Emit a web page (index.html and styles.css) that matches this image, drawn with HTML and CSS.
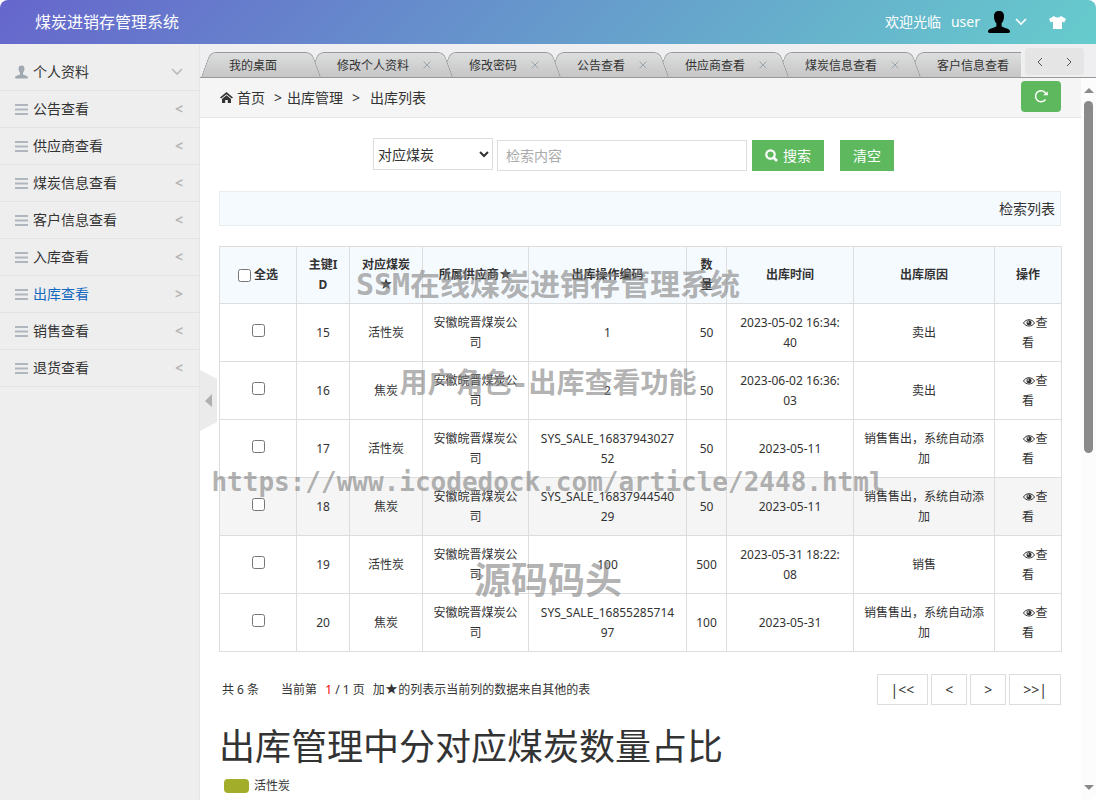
FILE: index.html
```html
<!DOCTYPE html>
<html lang="zh-CN">
<head>
    <meta charset="UTF-8">
    <meta name="viewport" content="width=device-width, initial-scale=1.0">
    <title>煤炭进销存管理系统</title>
    <link rel="stylesheet" href="styles.css">
</head>
<body>
    <!-- shared icons -->
    <svg class="icon-defs" aria-hidden="true">
        <symbol id="icon-user" viewBox="0 0 22 22">
            <path d="M11 0C14.500 0 16 2 16 5.200C16 8.500 15.200 10.500 13.600 12.200V15C14.600 17 22 17.200 22 20.400Q22 22 20 22H2Q0 22 0 20.400C0 17.200 7.400 17 8.400 15V12.200C6.800 10.500 6 8.500 6 5.200C6 2 7.500 0 11 0Z"/>
        </symbol>
        <symbol id="icon-bars" viewBox="0 0 13 11">
            <path d="M0 0h13v2H0zM0 4.500h13v2H0zM0 9h13v2H0z"/>
        </symbol>
        <symbol id="icon-down" viewBox="0 0 12 8">
            <path d="M1 1l5 5 5-5" fill="none" stroke="currentColor" stroke-width="1.700"/>
        </symbol>
        <symbol id="icon-close" viewBox="0 0 8 8">
            <path d="M.5.5l7 7M7.500.5l-7 7" fill="none" stroke="currentColor"/>
        </symbol>
        <symbol id="icon-eye" viewBox="0 0 12 10">
            <path d="M.5 5C3 .6 9 .6 11.500 5C9 9 3 9 .5 5Z" fill="none" stroke="currentColor"/>
            <circle cx="6" cy="4.800" r="2.500"/>
            <circle cx="5.200" cy="4" r=".8" fill="#fff"/>
        </symbol>
    </svg>

    <header class="header">
        <h1 class="logo">煤炭进销存管理系统</h1>
        <div class="user-box">
            <span>欢迎光临</span>
            <span class="user-name">user</span>
            <svg class="avatar"><use href="#icon-user"/></svg>
            <svg class="user-arrow"><use href="#icon-down"/></svg>
            <svg class="skin" viewBox="0 0 17 13"><path d="M5 0Q8.500 3 12 0L17 3L15.200 6.400L13 5.400V13H4V5.400L1.800 6.400L0 3Z"/></svg>
        </div>
    </header>

    <div class="wrapper">
        <nav class="sidebar">
            <a href="#"><svg class="menu-icon menu-user"><use href="#icon-user"/></svg>个人资料<svg class="menu-down"><use href="#icon-down"/></svg></a>
            <a href="#"><svg class="menu-icon"><use href="#icon-bars"/></svg>公告查看<i>&lt;</i></a>
            <a href="#"><svg class="menu-icon"><use href="#icon-bars"/></svg>供应商查看<i>&lt;</i></a>
            <a href="#"><svg class="menu-icon"><use href="#icon-bars"/></svg>煤炭信息查看<i>&lt;</i></a>
            <a href="#"><svg class="menu-icon"><use href="#icon-bars"/></svg>客户信息查看<i>&lt;</i></a>
            <a href="#"><svg class="menu-icon"><use href="#icon-bars"/></svg>入库查看<i>&lt;</i></a>
            <a href="#" class="active"><svg class="menu-icon"><use href="#icon-bars"/></svg>出库查看<i>&gt;</i></a>
            <a href="#"><svg class="menu-icon"><use href="#icon-bars"/></svg>销售查看<i>&lt;</i></a>
            <a href="#"><svg class="menu-icon"><use href="#icon-bars"/></svg>退货查看<i>&lt;</i></a>
        </nav>

        <button type="button" class="collapse" aria-label="收起菜单">
            <svg viewBox="0 0 17 61"><path d="M0 0L17 9V52L0 61Z" fill="#ebebeb"/><path d="M5 31L12 24V37Z" fill="#b0b0b0"/></svg>
        </button>

        <main class="main">
            <div class="tab-bar">
                <ul class="tabs">
                    <li>我的桌面</li>
                    <li>修改个人资料<svg><use href="#icon-close"/></svg></li>
                    <li>修改密码<svg><use href="#icon-close"/></svg></li>
                    <li>公告查看<svg><use href="#icon-close"/></svg></li>
                    <li>供应商查看<svg><use href="#icon-close"/></svg></li>
                    <li>煤炭信息查看<svg><use href="#icon-close"/></svg></li>
                    <li>客户信息查看<svg><use href="#icon-close"/></svg></li>
                </ul>
                <div class="tab-nav">
                    <button type="button" aria-label="上一个"><svg viewBox="0 0 6 10"><path d="M5 1L1 5l4 4"/></svg></button>
                    <button type="button" aria-label="下一个"><svg viewBox="0 0 6 10"><path d="M1 1l4 4-4 4"/></svg></button>
                </div>
            </div>

            <div class="frame">
                <div class="page">
                    <div class="breadcrumb">
                        <svg class="home" viewBox="0 0 13 11"><path d="M6.500 0L13 5.400L11.800 6.600L6.500 2.200L1.200 6.600L0 5.400Z"/><path d="M6.500 3.300L11 7V11H7.800V8H5.200V11H2V7Z"/></svg>
                        <a href="#">首页</a>
                        <span>&gt;</span>
                        <a href="#">出库管理</a>
                        <span>&gt;</span>
                        <a href="#" class="last">出库列表</a>
                        <button type="button" class="refresh" aria-label="刷新">
                            <svg viewBox="0 0 14 14"><path d="M11.500 10.500A5.500 5.500 0 1 1 12.300 5.500" fill="none" stroke="#fff" stroke-width="1.500"/><path d="M9 6.300h4.800V2.500Z" fill="#fff"/></svg>
                        </button>
                    </div>

                    <div class="container">
                        <form class="search">
                            <select name="field" aria-label="检索字段">
                                <option>对应煤炭</option>
                                <option>所属供应商</option>
                            </select>
                            <input type="text" name="keyword" placeholder="检索内容" aria-label="检索内容">
                            <button type="submit" class="btn"><svg viewBox="0 0 13 13"><circle cx="5.500" cy="5.500" r="4.200" fill="none" stroke="#fff" stroke-width="2.200"/><path d="M8.500 8.500L12 12" stroke="#fff" stroke-width="2.600"/></svg>搜索</button>
                            <button type="reset" class="btn btn-clear">清空</button>
                        </form>

                        <div class="list-title">检索列表</div>

                        <table>
                            <colgroup>
                                <col class="c-check"><col class="c-id"><col class="c-coal"><col class="c-supplier"><col class="c-code"><col class="c-num"><col class="c-time"><col class="c-reason"><col class="c-action">
                            </colgroup>
                            <thead>
                                <tr>
                                    <th><label><input type="checkbox">全选</label></th>
                                    <th>主键ID</th>
                                    <th>对应煤炭<span class="star">★</span></th>
                                    <th>所属供应商<span class="star">★</span></th>
                                    <th>出库操作编码</th>
                                    <th class="num">数量</th>
                                    <th>出库时间</th>
                                    <th>出库原因</th>
                                    <th>操作</th>
                                </tr>
                            </thead>
                            <tbody>
                                <tr>
                                    <td><input type="checkbox" aria-label="选择15"></td>
                                    <td>15</td>
                                    <td>活性炭</td>
                                    <td>安徽皖晋煤炭公司</td>
                                    <td>1</td>
                                    <td class="num">50</td>
                                    <td>2023-05-02 16:34:40</td>
                                    <td>卖出</td>
                                    <td><a href="#"><svg><use href="#icon-eye"/></svg>查看</a></td>
                                </tr>
                                <tr>
                                    <td><input type="checkbox" aria-label="选择16"></td>
                                    <td>16</td>
                                    <td>焦炭</td>
                                    <td>安徽皖晋煤炭公司</td>
                                    <td>2</td>
                                    <td class="num">50</td>
                                    <td>2023-06-02 16:36:03</td>
                                    <td>卖出</td>
                                    <td><a href="#"><svg><use href="#icon-eye"/></svg>查看</a></td>
                                </tr>
                                <tr>
                                    <td><input type="checkbox" aria-label="选择17"></td>
                                    <td>17</td>
                                    <td>活性炭</td>
                                    <td>安徽皖晋煤炭公司</td>
                                    <td>SYS_SALE_1683794302752</td>
                                    <td class="num">50</td>
                                    <td>2023-05-11</td>
                                    <td>销售售出，系统自动添加</td>
                                    <td><a href="#"><svg><use href="#icon-eye"/></svg>查看</a></td>
                                </tr>
                                <tr class="hover">
                                    <td><input type="checkbox" aria-label="选择18"></td>
                                    <td>18</td>
                                    <td>焦炭</td>
                                    <td>安徽皖晋煤炭公司</td>
                                    <td>SYS_SALE_1683794454029</td>
                                    <td class="num">50</td>
                                    <td>2023-05-11</td>
                                    <td>销售售出，系统自动添加</td>
                                    <td><a href="#"><svg><use href="#icon-eye"/></svg>查看</a></td>
                                </tr>
                                <tr>
                                    <td><input type="checkbox" aria-label="选择19"></td>
                                    <td>19</td>
                                    <td>活性炭</td>
                                    <td>安徽皖晋煤炭公司</td>
                                    <td>100</td>
                                    <td class="num">500</td>
                                    <td>2023-05-31 18:22:08</td>
                                    <td>销售</td>
                                    <td><a href="#"><svg><use href="#icon-eye"/></svg>查看</a></td>
                                </tr>
                                <tr>
                                    <td><input type="checkbox" aria-label="选择20"></td>
                                    <td>20</td>
                                    <td>焦炭</td>
                                    <td>安徽皖晋煤炭公司</td>
                                    <td>SYS_SALE_1685528571497</td>
                                    <td class="num">100</td>
                                    <td>2023-05-31</td>
                                    <td>销售售出，系统自动添加</td>
                                    <td><a href="#"><svg><use href="#icon-eye"/></svg>查看</a></td>
                                </tr>
                            </tbody>
                        </table>

                        <div class="pager">
                            <p>
                                <span class="total">共 6 条</span>
                                <span class="current">当前第 <b>1</b> / 1 页</span>
                                <span>加<span class="star">★</span>的列表示当前列的数据来自其他的表</span>
                            </p>
                            <button type="button">|&lt;&lt;</button>
                            <button type="button">&lt;</button>
                            <button type="button">&gt;</button>
                            <button type="button">&gt;&gt;|</button>
                        </div>

                        <h2>出库管理中分对应煤炭数量占比</h2>
                        <div class="legend"><span></span>活性炭</div>
                    </div>
                </div>

                <div class="scrollbar" aria-hidden="true">
                    <span class="arrow-up"></span>
                    <span class="thumb"></span>
                    <span class="arrow-down"></span>
                </div>
            </div>
        </main>
    </div>

    <div class="watermark">
        <p class="mark-title">SSM在线煤炭进销存管理系统</p>
        <p class="mark-role">用户角色-出库查看功能</p>
        <p class="mark-url">https://www.icodedock.com/article/2448.html</p>
        <p class="mark-site">源码码头</p>
    </div>
</body>
</html>
```
FILE: styles.css
```css
* {
    margin: 0;
    padding: 0;
    box-sizing: border-box;
}

body {
    font-family: "Noto Sans", "Noto Sans CJK SC", sans-serif;
    font-size: 14px;
    line-height: 20px;
    color: #333;
    background-color: #fff;
    height: 100vh;
    display: flex;
    flex-direction: column;
    overflow: hidden;
    position: relative;
}

a {
    color: inherit;
    text-decoration: none;
}

button,
input,
select {
    font: inherit;
    color: inherit;
}

button {
    cursor: pointer;
}

svg {
    fill: currentColor;
    flex: none;
}

.icon-defs {
    position: absolute;
    width: 0;
    height: 0;
}

/* header */
.header {
    flex: none;
    height: 44px;
    padding: 0 30px 0 35px;
    display: flex;
    justify-content: space-between;
    align-items: center;
    color: #fff;
    background: linear-gradient(135deg, #66c, #6cc);
    border-radius: 8px 8px 0 0;
}

.logo {
    font-size: 16px;
    font-weight: normal;
}

.user-box {
    display: flex;
    align-items: center;
}

.user-name {
    margin-left: 10px;
}

.avatar {
    width: 22px;
    height: 22px;
    margin-left: 8px;
    color: #000;
}

.user-arrow {
    width: 12px;
    height: 8px;
    margin-left: 5px;
}

.skin {
    width: 17px;
    height: 13px;
    margin-left: 22px;
}

/* left menu */
.wrapper {
    flex: 1;
    min-height: 0;
    display: flex;
    position: relative;
}

.sidebar {
    flex: none;
    width: 200px;
    padding-top: 10px;
    background-color: #eee;
    border-right: 1px solid #e5e5e5;
}

.sidebar a {
    display: flex;
    align-items: center;
    height: 37px;
    padding: 0 16px 0 15px;
    border-bottom: 1px solid #e2e2e2;
}

.sidebar a.active {
    color: #1469bf;
}

.sidebar i {
    margin-left: auto;
    font-style: normal;
    font-weight: bold;
    color: #b6b6b6;
}

.menu-icon {
    width: 13px;
    height: 11px;
    margin-right: 5px;
    color: #b0b6bd;
}

.menu-user {
    height: 14px;
    color: #a0a8b0;
}

.menu-down {
    width: 12px;
    height: 8px;
    margin-left: auto;
    color: #bbb;
}

.collapse {
    position: absolute;
    left: 200px;
    top: 326px;
    width: 17px;
    height: 61px;
    border: none;
    background: none;
    z-index: 2;
}

.collapse svg {
    display: block;
    width: 17px;
    height: 61px;
}

/* tabs */
.main {
    flex: 1;
    min-width: 0;
    display: flex;
    flex-direction: column;
}

.tab-bar {
    flex: none;
    height: 34px;
    display: flex;
    background-color: #efeef0;
    border-bottom: 1px solid #999;
}

.tabs {
    flex: 1;
    min-width: 0;
    display: flex;
    align-items: flex-end;
    overflow: hidden;
    list-style: none;
    padding-left: 1px;
}

.tabs li {
    position: relative;
    z-index: 1;
    flex: none;
    height: 25px;
    line-height: 28px;
    font-size: 12px;
    padding: 0 44px 0 28px;
    margin-right: -12px;
    white-space: nowrap;
}

.tabs li:nth-child(1) { z-index: 7; }
.tabs li:nth-child(2) { z-index: 6; }
.tabs li:nth-child(3) { z-index: 5; }
.tabs li:nth-child(4) { z-index: 4; }
.tabs li:nth-child(5) { z-index: 3; }
.tabs li:nth-child(6) { z-index: 2; }

.tabs li::before,
.tabs li::after {
    content: "";
    position: absolute;
    z-index: -1;
    top: 0;
    bottom: 0;
    width: 60%;
    background: linear-gradient(#dcdedd, #c6c5c7);
    border-top: 1px solid #999;
}

.tabs li::before {
    left: 0;
    border-left: 1px solid #999;
    border-top-left-radius: 6px;
    transform: skewX(-20deg);
    transform-origin: bottom;
}

.tabs li::after {
    right: 0;
    border-right: 1px solid #999;
    border-top-right-radius: 6px;
    transform: skewX(20deg);
    transform-origin: bottom;
}

.tabs svg {
    position: absolute;
    right: 22px;
    top: 9px;
    width: 8px;
    height: 8px;
    color: #9aa4ac;
}

.tab-nav {
    flex: none;
    width: 59px;
    height: 27px;
    margin: 4px 12px 0 4px;
    display: flex;
    background-color: #e5e5e5;
    border-radius: 4px;
}

.tab-nav button {
    flex: 1;
    border: none;
    background: none;
}

.tab-nav svg {
    width: 6px;
    height: 10px;
    fill: none;
    stroke: #555;
}

/* page frame */
.frame {
    flex: 1;
    min-height: 0;
    display: flex;
}

.page {
    flex: 1;
    min-width: 0;
    overflow: hidden;
}

.breadcrumb {
    height: 40px;
    display: flex;
    align-items: center;
    padding: 0 20px;
    background-color: #f5f5f5;
    border-bottom: 1px solid #e5e5e5;
}

.breadcrumb .home {
    width: 13px;
    height: 11px;
    margin-right: 4px;
}

.breadcrumb span {
    margin: 0 5px 0 9px;
}

.breadcrumb .last {
    margin-left: 5px;
}

.refresh {
    width: 40px;
    height: 31px;
    margin: 0 0 3px auto;
    border: none;
    border-radius: 4px;
    background-color: #5eb95e;
}

.refresh svg {
    display: block;
    width: 14px;
    height: 14px;
    margin: 0 auto;
}

.container {
    padding: 20px 20px 0 19px;
}

/* search form */
.search {
    display: flex;
    justify-content: center;
    height: 33px;
    padding-right: 13px;
}

.search select {
    width: 120px;
    height: 32px;
    border: 1px solid #ddd;
    background-color: #fff;
}

.search input {
    width: 250px;
    height: 31px;
    margin: 2px 5px 0 4px;
    padding: 0 8px;
    border: 1px solid #ddd;
}

.search input::placeholder {
    color: #aaa;
}

.btn {
    display: flex;
    align-items: center;
    height: 31px;
    margin-top: 2px;
    padding: 0 13px;
    border: none;
    color: #fff;
    background-color: #5eb95e;
}

.btn svg {
    width: 13px;
    height: 13px;
    margin-right: 5px;
}

.btn-clear {
    margin-left: 16px;
}

.list-title {
    height: 35px;
    line-height: 33px;
    margin: 20px 0;
    padding: 0 5px;
    text-align: right;
    background-color: #f5faff;
    border: 1px solid #e8eef0;
}

/* data table */
table {
    width: 100%;
    table-layout: fixed;
    border-collapse: collapse;
    font-size: 12px;
    text-align: center;
    word-break: break-all;
}

.c-check { width: 77px; }
.c-id { width: 53px; }
.c-coal { width: 73px; }
.c-supplier { width: 106px; }
.c-code { width: 158px; }
.c-num { width: 40px; }
.c-time { width: 127px; }
.c-reason { width: 141px; }
.c-action { width: 67px; }

tr {
    height: 58px;
}

thead tr {
    height: 57px;
    background-color: #f5faff;
}

tr.hover {
    background-color: #f5f5f5;
}

th,
td {
    padding: 8px 10px;
    border: 1px solid #ddd;
    vertical-align: middle;
}

.num {
    padding: 8px;
}

th label {
    display: flex;
    justify-content: center;
    align-items: center;
    gap: 3px;
}

td svg {
    width: 12px;
    height: 10px;
    margin-left: 15px;
    vertical-align: -1px;
}

.star {
    font-family: "DejaVu Sans", sans-serif;
    font-size: 15px;
    font-weight: normal;
    line-height: 1;
}

/* pager */
.pager {
    display: flex;
    align-items: center;
    gap: 3px;
    margin-top: 22px;
}

.pager p {
    flex: 1;
    display: flex;
    padding-left: 3px;
    font-size: 12px;
}

.total {
    margin-right: 22px;
}

.current {
    margin-right: 8px;
}

.current b {
    margin-left: 5px;
    font-weight: normal;
    color: #f00;
}

.pager button {
    height: 31px;
    padding: 0 13px;
    border: 1px solid #ddd;
    background-color: #fff;
}

h2 {
    margin-top: 22px;
    font-size: 36px;
    font-weight: normal;
    line-height: 40px;
}

.legend {
    display: flex;
    align-items: center;
    gap: 5px;
    margin-top: 9px;
    padding-left: 5px;
    font-size: 12px;
}

.legend span {
    width: 25px;
    height: 14px;
    border-radius: 4px;
    background-color: #a2ae2a;
}

/* scrollbar */
.scrollbar {
    flex: none;
    width: 15px;
    padding: 10px 3px;
    display: flex;
    flex-direction: column;
    background-color: #fcfcfc;
    border-bottom-right-radius: 8px;
}

.arrow-up,
.arrow-down {
    border: 5px solid transparent;
}

.arrow-up {
    border-top: none;
    border-bottom-color: #8a8a8a;
}

.thumb {
    height: 352px;
    margin: 8px 0 auto;
    border-radius: 5px;
    background-color: #8a8a8a;
}

.arrow-down {
    border-bottom: none;
    border-top-color: #8a8a8a;
}

/* watermark over the whole page */
.watermark {
    position: absolute;
    top: 235px;
    left: 0;
    right: 0;
    z-index: 10;
    font-family: "DejaVu Sans Mono", "Noto Sans CJK SC", monospace;
    font-weight: bold;
    line-height: 99px;
    text-align: center;
    color: rgba(128, 128, 128, 0.6);
    pointer-events: none;
}

.mark-title {
    font-size: 30px;
}

.mark-role {
    font-size: 28px;
}

.mark-url {
    font-size: 26px;
}

.mark-site {
    font-size: 37px;
}
```
